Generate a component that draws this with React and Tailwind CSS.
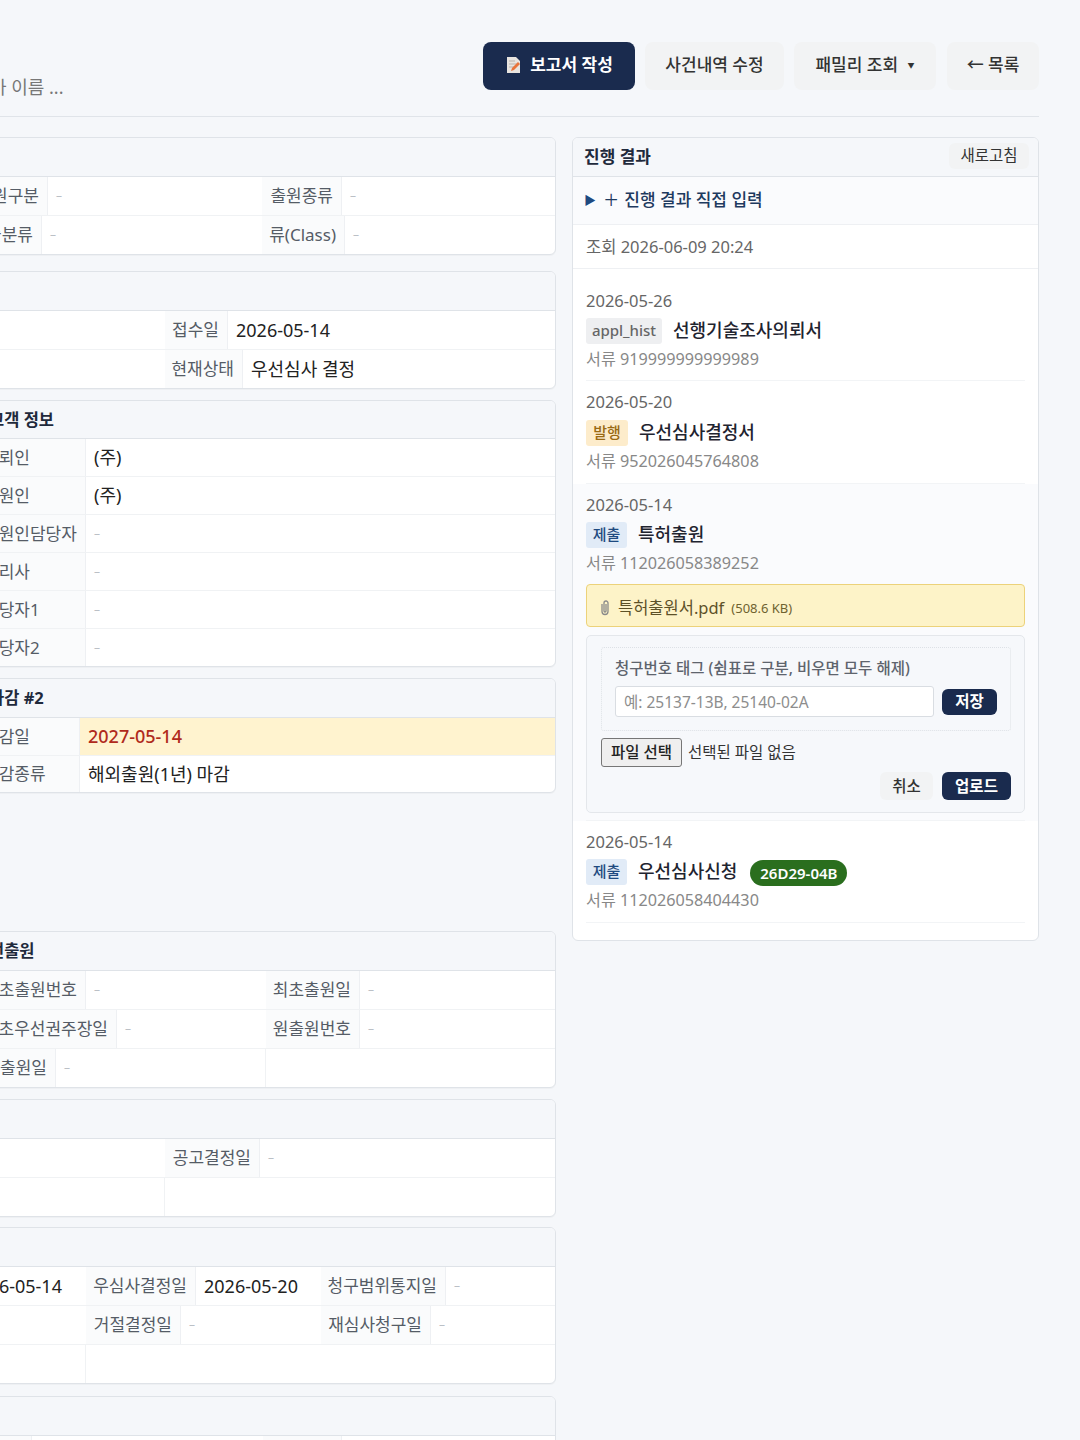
import React from 'react';

const Card = ({ title, gap, hh = 'h-[39px]', children }) => (
  <section className={`bg-white border border-[#dfe3e8] rounded-[6px] shadow-[0_1px_1px_rgba(0,0,0,0.03)] overflow-hidden ${gap}`}>
    <h3 className={`${hh} pl-[32px] flex items-center bg-[#f5f7fa] border-b border-[#dfe3e8] text-[16.5px] font-bold text-[#1f2a3c] whitespace-nowrap`}>
      {title}
    </h3>
    {children}
  </section>
);

// one column of a row: a shaded label cell and a value next to it
const Cell = ({ w, lw, label, value, dash, left }) => (
  <div className={`flex shrink-0 ${w}`}>
    {label && (
      <div className={`${lw} shrink-0 flex items-center ${left ? 'justify-start pl-[26px]' : 'justify-end pr-[8px]'} bg-[#fafbfc] border-r border-[#eef0f3] text-[#555c66] whitespace-nowrap`}>
        {label}
      </div>
    )}
    {value && <div className="pl-[8px] flex items-center text-[18px] text-[#222] whitespace-nowrap">{value}</div>}
    {dash && <div className="pl-[8px] flex items-center text-[#bbc0c6] text-[12px]">–</div>}
  </div>
);

const Row = ({ h = 'h-[38px]', last, children, className = '' }) => (
  <div className={`flex ${h} ${last ? '' : 'border-b border-[#f0f2f4]'} ${className}`}>{children}</div>
);

const Badge = ({ className, children }) => (
  <span className={`inline-flex items-center justify-center h-[26px] rounded-[3px] text-[15px] font-medium ${className}`}>{children}</span>
);

const NavyBtn = ({ className, children }) => (
  <button className={`bg-[#1a2b4e] text-white font-bold rounded-[6px] text-[15.5px] ${className}`}>{children}</button>
);

const Entry = ({ date, badge, title, code, extra, className = '', children }) => (
  <div className={`mx-[13px] border-b border-[#f2f4f6] ${className}`}>
    <div className="h-[24px] flex items-center text-[16.5px] text-[#666]">{date}</div>
    <div className="mt-[4px] h-[27px] flex items-center">
      {badge}
      <span className="ml-[11px] -mt-[1px] text-[18px] font-medium text-[#1f2430] whitespace-nowrap">{title}</span>
      {extra}
    </div>
    <div className="mt-[2px] h-[26px] flex items-center text-[16.2px] text-[#888]">서류 {code}</div>
    {children}
  </div>
);

const GrayBtn = ({ className, children }) => (
  <button className={`bg-[#f2f3f4] text-[#333] rounded-[8px] text-[17px] font-medium h-[48px] pb-[2px] ${className}`}>{children}</button>
);

export default function App() {
  return (
    <div className="w-[1080px] h-[1440px] overflow-hidden bg-[#f5f7fa] font-['Noto_Sans','Noto_Sans_CJK_KR',sans-serif] text-[17px]">
      <div className="-ml-[44px] w-[1083px]">
        <header className="flex justify-between items-end pt-[42px] pb-[26px] border-b border-[#e0e4e9]">
          <div className="pl-[34px] -mb-[11px] text-[#777] text-[18px] whitespace-nowrap">가 이름 ...</div>
          <div className="flex gap-[10px]">
            <button className="w-[152px] h-[48px] pb-[2px] bg-[#1a2b4e] text-white rounded-[8px] text-[17px] font-bold flex items-center justify-center gap-[8px]">
              <svg width="17" height="18" viewBox="0 0 17 18">
                <path d="M2 1h9l4 4v12H2z" fill="#e8e4df" />
                <path d="M4 5h6M4 8h8M4 11h5" stroke="#b9b3ac" strokeWidth="1" />
                <path d="M6 15l1-3 6-6 2 2-6 6z" fill="#e8743b" />
              </svg>
              보고서 작성
            </button>
            <GrayBtn className="w-[139px]">사건내역 수정</GrayBtn>
            <GrayBtn className="w-[142px]">
              패밀리 조회 <span className="ml-[5px] text-[7px] align-middle">▼</span>
            </GrayBtn>
            <GrayBtn className="w-[92px] ml-[1px]">← 목록</GrayBtn>
          </div>
        </header>

        <div className="flex gap-[16px] items-start mt-[20px]">
          <div className="w-[600px] shrink-0">
            <Card title="" gap="mb-[16px]">
              <Row h="h-[39px]">
                <Cell w="w-[305px]" lw="w-[91px]" label="출원구분" dash />
                <Cell w="w-[295px]" lw="w-[80px]" label="출원종류" dash />
              </Row>
              <Row h="h-[38px]" last>
                <Cell w="w-[305px]" lw="w-[85px]" label="기술분류" dash />
                <Cell w="w-[295px]" lw="w-[83px]" label="류(Class)" dash />
              </Row>
            </Card>

            <Card title="" gap="mb-[11px]">
              <Row h="h-[39px]">
                <Cell w="w-[208px]" />
                <Cell w="w-[392px]" lw="w-[63px]" label="접수일" value="2026-05-14" />
              </Row>
              <Row h="h-[38px]" last>
                <Cell w="w-[208px]" />
                <Cell w="w-[392px]" lw="w-[78px]" label="현재상태" value="우선심사 결정" />
              </Row>
            </Card>

            <Card title="고객 정보" gap="mb-[11px]" hh="h-[38px] pt-[2px]">
              <Row><Cell w="w-full" lw="w-[129px]" left label="의뢰인" value="(주)" /></Row>
              <Row><Cell w="w-full" lw="w-[129px]" left label="출원인" value="(주)" /></Row>
              <Row><Cell w="w-full" lw="w-[129px]" left label="출원인담당자" dash /></Row>
              <Row><Cell w="w-full" lw="w-[129px]" left label="관리사" dash /></Row>
              <Row><Cell w="w-full" lw="w-[129px]" left label="담당자1" dash /></Row>
              <Row h="h-[37px]" last><Cell w="w-full" lw="w-[129px]" left label="담당자2" dash /></Row>
            </Card>

            <Card title="마감 #2" gap="mb-[138px]">
              <Row className="bg-[#fff3cf]">
                <div className="w-[123px] shrink-0 flex items-center pl-[26px] bg-[#fafbfc] border-r border-[#eef0f3] text-[#555c66]">마감일</div>
                <div className="pl-[8px] flex items-center text-[18px] text-[#b02a1c] font-medium">2027-05-14</div>
              </Row>
              <Row h="h-[36px]" last><Cell w="w-full" lw="w-[123px]" left label="마감종류" value="해외출원(1년) 마감" /></Row>
            </Card>

            <Card title="선출원" gap="mb-[11px]">
              <Row h="h-[39px]">
                <Cell w="w-[309px]" lw="w-[129px]" label="최초출원번호" dash />
                <Cell w="w-[291px]" lw="w-[94px]" label="최초출원일" dash />
              </Row>
              <Row h="h-[39px]">
                <Cell w="w-[309px]" lw="w-[160px]" label="최초우선권주장일" dash />
                <Cell w="w-[291px]" lw="w-[94px]" label="원출원번호" dash />
              </Row>
              <Row h="h-[38px]" last>
                <Cell w="w-[309px] border-r border-[#f0f2f4]" lw="w-[99px]" label="원출원일" dash />
              </Row>
            </Card>

            <Card title="" gap="mb-[10px]">
              <Row h="h-[39px]">
                <Cell w="w-[208px]" />
                <Cell w="w-[392px]" lw="w-[95px]" label="공고결정일" dash />
              </Row>
              <Row h="h-[38px]" last>
                <Cell w="w-[208px] border-r border-[#f0f2f4]" />
              </Row>
            </Card>

            <Card title="" gap="mb-[12px]">
              <Row h="h-[39px]">
                <div className="w-[129px] shrink-0 pl-[11px] flex items-center text-[18px] text-[#222]">2026-05-14</div>
                <Cell w="w-[235px]" lw="w-[110px]" label="우심사결정일" value="2026-05-20" />
                <Cell w="w-[236px]" lw="w-[125px]" label="청구범위통지일" dash />
              </Row>
              <Row h="h-[39px]">
                <div className="w-[129px] shrink-0" />
                <Cell w="w-[235px]" lw="w-[95px]" label="거절결정일" dash />
                <Cell w="w-[236px]" lw="w-[110px]" label="재심사청구일" dash />
              </Row>
              <Row h="h-[38px]" last>
                <div className="w-[129px] shrink-0 border-r border-[#f0f2f4]" />
              </Row>
            </Card>

            <Card title="" gap="">
              <Row h="h-[39px]">
                <Cell w="w-[306px]" lw="w-[75px]" label=" " dash />
                <Cell w="w-[294px]" lw="w-[79px]" label=" " dash />
              </Row>
            </Card>
          </div>

          <aside className="w-[467px] shrink-0 bg-white border border-[#dfe3e8] rounded-[6px] overflow-hidden pb-[17px]">
            <div className="h-[39px] flex items-center justify-between pl-[11px] pr-[9px] bg-[#f5f7fa] border-b border-[#dfe3e8]">
              <span className="text-[17px] font-bold text-[#1f2a3c]">진행 결과</span>
              <button className="w-[80px] h-[26px] -mt-[2px] bg-[#f2f3f4] rounded-[6px] text-[15.5px] text-[#333]">새로고침</button>
            </div>
            <div className="h-[48px] flex items-center pl-[11px] pb-[2px] bg-[#fafbfd] border-b border-[#eef0f3] text-[#1e3a5f] font-medium text-[17px]">
              <span className="text-[12px] mt-[2px] mr-[8px] text-[#1e4a80]">▶</span>
              <span className="text-[25px] font-light leading-none mr-[6px]">+</span>
              진행 결과 직접 입력
            </div>
            <div className="h-[44px] flex items-center pl-[13px] pt-[1px] border-b border-[#eef0f3] text-[16.5px] text-[#666]">조회 2026-06-09 20:24</div>

            <Entry
              className="pt-[20px] pb-[8px]"
              date="2026-05-26"
              title="선행기술조사의뢰서"
              code="919999999999989"
              badge={<Badge className="w-[76px] bg-[#eeeff1] text-[#666]">appl_hist</Badge>}
            />
            <Entry
              className="pt-[9px] pb-[9px] [&>div:nth-child(2)]:mt-[5px]"
              date="2026-05-20"
              title="우선심사결정서"
              code="952026045764808"
              badge={<Badge className="w-[42px] bg-[#fdeccb] text-[#9a6a14]">발행</Badge>}
            />
            <div className="bg-[#fafbfd]">
              <Entry
                className="pt-[9px] pb-[7px]"
                date="2026-05-14"
                title="특허출원"
                code="112026058389252"
                badge={<Badge className="w-[41px] bg-[#e1ebf7] text-[#1e4a80]">제출</Badge>}
              >
                <div className="mt-[8px] h-[43px] flex items-center pl-[12px] bg-[#fdf3c8] border border-[#ecd27a] rounded-[4px]">
                  <svg width="12" height="17" viewBox="0 0 12 17" fill="none" stroke="#8a8a8a" strokeWidth="1.3" className="mt-[3px]">
                    <path d="M3 5v7.5a3 3 0 0 0 6 0V4a2 2 0 0 0-4 0v8a1 1 0 0 0 2 0V5" />
                  </svg>
                  <span className="ml-[7px] mt-[5px] text-[#5d5128] text-[16.5px]">특허출원서.pdf</span>
                  <span className="ml-[7px] mt-[6px] text-[#6f6230] text-[13px]">(508.6 KB)</span>
                </div>
                <div className="mt-[8px] h-[178px] bg-[#f6f8fb] border border-[#e4e7eb] rounded-[5px] pt-[11px] pl-[14px] pr-[13px]">
                  <div className="h-[84px] border border-dotted border-[#dde1e6] rounded-[3px] pl-[13px] pr-[13px] pt-[10px]">
                    <div className="text-[15.5px] font-medium text-[#5e646d] leading-[20px] whitespace-nowrap">청구번호 태그 (쉼표로 구분, 비우면 모두 해제)</div>
                    <div className="mt-[8px] flex items-center gap-[8px]">
                      <input
                        readOnly
                        placeholder="예: 25137-13B, 25140-02A"
                        className="w-[319px] h-[31px] bg-white border border-[#d9dde2] rounded-[3px] pl-[8px] text-[15.5px] placeholder:text-[#8d8d8d]"
                      />
                      <NavyBtn className="w-[55px] h-[26px] pt-[1px]">저장</NavyBtn>
                    </div>
                  </div>
                  <div className="mt-[7px] flex items-center">
                    <button className="w-[81px] h-[29px] bg-[#efefef] border border-[#767676] rounded-[3px] text-[15.5px] font-medium text-[#222]">파일 선택</button>
                    <span className="ml-[6px] text-[15.5px] text-[#333]">선택된 파일 없음</span>
                  </div>
                  <div className="mt-[5px] flex justify-end gap-[9px]">
                    <button className="w-[53px] h-[28px] pt-[2px] bg-[#f2f3f4] rounded-[6px] text-[15.5px] font-medium text-[#333]">취소</button>
                    <NavyBtn className="w-[69px] h-[28px] pt-[2px]">업로드</NavyBtn>
                  </div>
                </div>
              </Entry>
            </div>
            <Entry
              className="pt-[9px] pb-[9px]"
              date="2026-05-14"
              title="우선심사신청"
              code="112026058404430"
              badge={<Badge className="w-[41px] bg-[#e1ebf7] text-[#1e4a80]">제출</Badge>}
              extra={
                <span className="ml-[13px] mt-[3px] pt-[1px] h-[26px] w-[97px] rounded-full bg-[#2a6e1e] text-white text-[15px] font-semibold flex items-center justify-center">26D29-04B</span>
              }
            />
          </aside>
        </div>
      </div>
    </div>
  );
}
